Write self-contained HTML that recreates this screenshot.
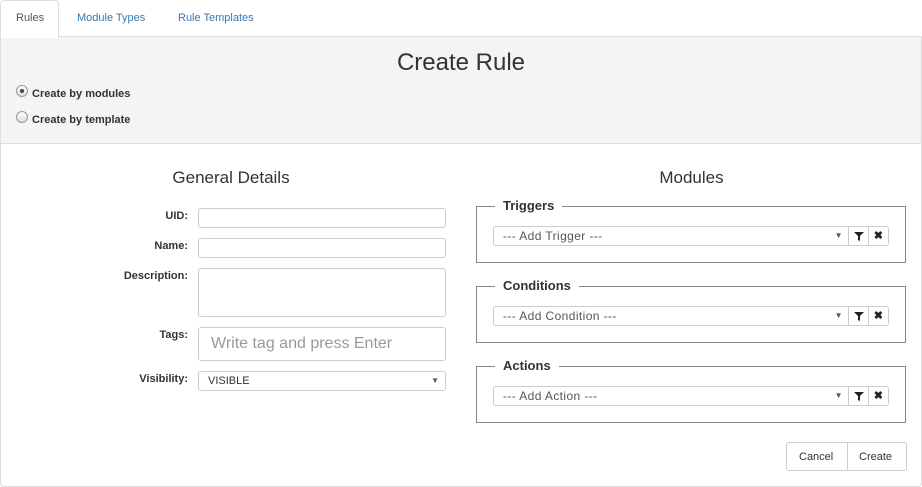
<!DOCTYPE html>
<html><head><style>
*{box-sizing:border-box;margin:0;padding:0}
body{width:922px;height:487px;background:#fff;font-family:"Liberation Sans",Arial,sans-serif;position:relative;overflow:hidden;color:#333}
.a{position:absolute}
.tab{position:absolute;top:12px;font-size:11px;color:#337ab7}
.panel{position:absolute;left:0;top:36px;width:922px;height:451px;border:1px solid #ddd;border-radius:0 0 4px 4px}
.hdr{position:absolute;left:1px;top:37px;width:920px;height:107px;background:#f4f4f4;border-bottom:1px solid #ddd}
.radio{position:absolute;width:12px;height:12px;border-radius:50%;border:1px solid #999;background:linear-gradient(#fff,#ddd)}
.lbl{position:absolute;font-size:11px;font-weight:bold;color:#333;text-align:right;width:90px}
.inp{position:absolute;left:198px;width:248px;border:1px solid #ccc;border-radius:3px;background:#fff}
.fs{position:absolute;left:476px;width:430px;height:57px;border:1px solid #888}
.fs .lg{position:absolute;left:18px;top:-9px;background:#fff;padding:0 8px;font-size:13px;font-weight:bold;color:#333}
.sel{position:absolute;left:16px;top:19px;width:396px;height:20px;border:1px solid #ccc;border-radius:3px;font-size:12px;color:#555;padding:2px 9px;letter-spacing:.4px}
.sel .ar{position:absolute;right:45px;top:4px;font-size:8px;color:#555}
.sel .b1{position:absolute;right:20px;top:0;width:20px;height:18px;border-left:1px solid #ccc}
.sel .b2{position:absolute;right:0;top:0;width:20px;height:18px;border-left:1px solid #ccc;font-size:11px;font-weight:bold;color:#222;text-align:center;line-height:18px}
</style></head><body>
<div class="panel"></div>
<div class="a" style="left:0;top:0;width:59px;height:38px;border:1px solid #ddd;border-bottom:none;border-radius:4px 4px 0 0;background:#fff;z-index:2"></div>
<div class="tab" style="left:16px;color:#555;z-index:3">Rules</div>
<div class="tab" style="left:77px">Module Types</div>
<div class="tab" style="left:178px">Rule Templates</div>
<div class="hdr"></div>
<div class="a" style="left:0;width:922px;top:49px;text-align:center;font-size:24px;color:#333">Create Rule</div>
<div class="radio" style="left:16px;top:85px"><div class="a" style="left:3px;top:3px;width:4px;height:4px;border-radius:50%;background:#444"></div></div>
<div class="a" style="left:32px;top:88px;font-size:11px;font-weight:bold">Create by modules</div>
<div class="radio" style="left:16px;top:111px"></div>
<div class="a" style="left:32px;top:114px;font-size:11px;font-weight:bold">Create by template</div>

<div class="a" style="left:0;width:462px;top:168px;text-align:center;font-size:17px">General Details</div>
<div class="a" style="left:461px;width:461px;top:168px;text-align:center;font-size:17px">Modules</div>

<div class="lbl" style="left:98px;top:210px">UID:</div>
<div class="inp" style="top:208px;height:20px"></div>
<div class="lbl" style="left:98px;top:240px">Name:</div>
<div class="inp" style="top:238px;height:20px"></div>
<div class="lbl" style="left:98px;top:270px">Description:</div>
<div class="inp" style="top:268px;height:49px"></div>
<div class="lbl" style="left:98px;top:329px">Tags:</div>
<div class="inp" style="top:327px;height:34px;font-size:16px;color:#999;padding:7px 12px">Write tag and press Enter</div>
<div class="lbl" style="left:98px;top:373px">Visibility:</div>
<div class="inp" style="top:371px;height:20px;font-size:11px;color:#333;padding:3px 9px">VISIBLE<span class="a" style="right:6px;top:4px;font-size:8px;color:#555">▼</span></div>

<div class="fs" style="top:206px"><div class="lg">Triggers</div><div class="sel">--- Add Trigger ---<span class="ar">▼</span><div class="b1"><svg width="20" height="18"><path d="M5 5h10l-4 4v5l-2-1v-4z" fill="#222"/></svg></div><div class="b2">✖</div></div></div>
<div class="fs" style="top:286px"><div class="lg">Conditions</div><div class="sel">--- Add Condition ---<span class="ar">▼</span><div class="b1"><svg width="20" height="18"><path d="M5 5h10l-4 4v5l-2-1v-4z" fill="#222"/></svg></div><div class="b2">✖</div></div></div>
<div class="fs" style="top:366px"><div class="lg">Actions</div><div class="sel">--- Add Action ---<span class="ar">▼</span><div class="b1"><svg width="20" height="18"><path d="M5 5h10l-4 4v5l-2-1v-4z" fill="#222"/></svg></div><div class="b2">✖</div></div></div>

<div class="a" style="left:786px;top:442px;width:121px;height:29px;border:1px solid #ccc;border-radius:3px"></div>
<div class="a" style="left:847px;top:443px;width:1px;height:27px;background:#ccc"></div>
<div class="a" style="left:799px;top:451px;font-size:11px">Cancel</div>
<div class="a" style="left:859px;top:451px;font-size:11px">Create</div>
</body></html>
